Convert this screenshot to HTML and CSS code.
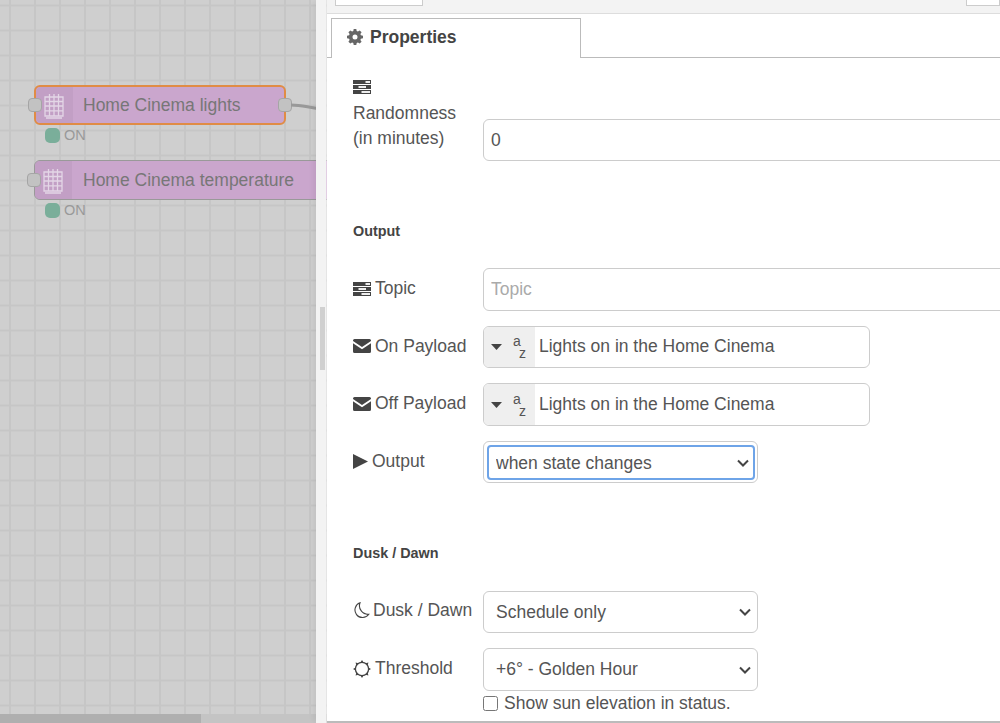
FILE: index.html
```html
<!DOCTYPE html>
<html lang="en">
<head>
<meta charset="utf-8">
<title>Node properties</title>
<link rel="stylesheet" href="styles.css">
</head>
<body>
<svg class="defs" width="0" height="0" aria-hidden="true">
  <symbol id="i-tasks" viewBox="0 0 18 14">
    <path fill="#444" d="M0 0h18v4H0zM0 5h18v4H0zM0 10h18v4H0z"/>
    <path fill="#eee" d="M12.500 1H17v2h-4.500zM5.500 6H13v2H5.500zM8.500 11H17v2H8.500z"/>
  </symbol>
  <symbol id="i-mail" viewBox="0 0 18 14">
    <path fill="#444" d="M0 1.500A1.500 1.500 0 0 1 1.500 0h15A1.500 1.500 0 0 1 18 1.500v.6L9 8 0 2.100zM0 4.300 9 10.200l9-5.900v8.200a1.500 1.500 0 0 1-1.500 1.500h-15A1.500 1.500 0 0 1 0 12.500z"/>
  </symbol>
</svg>

<main class="app">
  <section class="canvas">
    <div class="node selected node-lights">
      <span class="node-icon">
        <svg width="22" height="27" viewBox="0 0 22 27"><path fill="none" stroke="#e3d6e6" stroke-width="1.300" d="M2 5h18v19H2zM2 9.500h18M2 14h18M2 18.800h18M6.500 2v22M11 2v22M15.500 2v22M3 26h16"/></svg>
      </span>
      <span class="node-label">Home Cinema lights</span>
      <span class="port port-in"></span>
      <span class="port port-out"></span>
    </div>
    <div class="status status-lights"><span class="dot"></span>ON</div>

    <div class="node node-temp">
      <span class="node-icon">
        <svg width="22" height="27" viewBox="0 0 22 27"><path fill="none" stroke="#e3d6e6" stroke-width="1.300" d="M2 5h18v19H2zM2 9.500h18M2 14h18M2 18.800h18M6.500 2v22M11 2v22M15.500 2v22M3 26h16"/></svg>
      </span>
      <span class="node-label">Home Cinema temperature</span>
      <span class="port port-in"></span>
    </div>
    <div class="status status-temp"><span class="dot"></span>ON</div>

    <svg class="wire" width="40" height="20" viewBox="0 0 40 20"><path d="M0 4 C12 4 18 7 32 8" fill="none" stroke="#999" stroke-width="3"/></svg>

    <div class="scrollbar"><div class="thumb"></div></div>
    <div class="splitter"><span class="grip"></span></div>
  </section>

  <section class="panel">
    <div class="toolbar">
      <span class="tool-btn tool-left"></span>
      <span class="tool-btn tool-right"></span>
    </div>
    <div class="tabs">
      <div class="tab">
        <svg class="cog" width="16" height="16" viewBox="0 0 16 16"><path fill="#666" fill-rule="evenodd" d="M6.700 0h2.600l.4 2.100 1.200.5 1.800-1.200 1.900 1.900-1.200 1.800.5 1.200 2.100.4v2.600l-2.100.4-.5 1.200 1.200 1.800-1.900 1.900-1.800-1.200-1.200.5-.4 2.100H6.700l-.4-2.100-1.200-.5-1.800 1.200-1.900-1.900 1.200-1.800-.5-1.200L0 9.300V6.700l2.100-.4.500-1.200-1.200-1.800 1.900-1.900 1.800 1.200 1.200-.5zM8 5.500a2.500 2.500 0 1 0 0 5 2.500 2.500 0 0 0 0-5z"/></svg>
        Properties
      </div>
    </div>

    <form class="form">
      <div class="row row-random">
        <label class="label label-stack">
          <svg class="icon"><use href="#i-tasks"/></svg>
          <span>Randomness<br>(in minutes)</span>
        </label>
        <input class="field field-wide" type="text" value="0">
      </div>

      <h3 class="heading heading-output">Output</h3>

      <div class="row row-topic">
        <label class="label"><svg class="icon"><use href="#i-tasks"/></svg>Topic</label>
        <input class="field field-wide" type="text" placeholder="Topic">
      </div>

      <div class="row row-on">
        <label class="label"><svg class="icon"><use href="#i-mail"/></svg>On Payload</label>
        <div class="typed">
          <span class="typed-btn">
            <svg width="11" height="6" viewBox="0 0 11 6"><path fill="#444" d="M0 0h11L5.500 6z"/></svg>
            <span class="az"><span class="az-a">a</span><span class="az-z">z</span></span>
          </span>
          <span class="typed-value">Lights on in the Home Cinema</span>
        </div>
      </div>

      <div class="row row-off">
        <label class="label"><svg class="icon"><use href="#i-mail"/></svg>Off Payload</label>
        <div class="typed">
          <span class="typed-btn">
            <svg width="11" height="6" viewBox="0 0 11 6"><path fill="#444" d="M0 0h11L5.500 6z"/></svg>
            <span class="az"><span class="az-a">a</span><span class="az-z">z</span></span>
          </span>
          <span class="typed-value">Lights on in the Home Cinema</span>
        </div>
      </div>

      <div class="row row-output">
        <label class="label"><svg class="icon icon-play" viewBox="0 0 15 15"><path fill="#444" d="M0 0l15 7.500L0 15z"/></svg>Output</label>
        <div class="select-ring">
          <select class="select select-focus"><option>when state changes</option></select>
        </div>
      </div>

      <h3 class="heading heading-dusk">Dusk / Dawn</h3>

      <div class="row row-dusk">
        <label class="label"><svg class="icon icon-moon" viewBox="0 0 16 17"><path fill="none" stroke="#444" stroke-width="1.100" d="M6.500.8A7.600 7.600 0 1 0 15.300 12.300 8.600 8.600 0 0 1 6.500.8z"/></svg>Dusk / Dawn</label>
        <select class="select"><option>Schedule only</option></select>
      </div>

      <div class="row row-threshold">
        <label class="label"><svg class="icon icon-sun" viewBox="0 0 18 18"><circle cx="9" cy="9" r="6.600" fill="none" stroke="#444" stroke-width="1.300"/><path fill="#444" d="M9 0l1.600 2.500H7.400zM9 18l-1.600-2.500h3.200zM0 9l2.500-1.600v3.200zM18 9l-2.500 1.600V7.400zM2.600 2.600l2.900.7-2.200 2.200zM15.400 15.400l-2.900-.7 2.200-2.200zM15.400 2.600l-.7 2.900-2.200-2.200zM2.600 15.400l.7-2.900 2.200 2.200z"/></svg>Threshold</label>
        <select class="select"><option>+6° - Golden Hour</option></select>
      </div>

      <label class="check-row"><input class="check" type="checkbox">Show sun elevation in status.</label>
    </form>
  </section>
</main>
</body>
</html>
```
FILE: styles.css
```css
* { box-sizing: border-box; }
html, body { margin: 0; height: 100%; overflow: hidden; }
body {
  font-family: "Liberation Sans", Arial, sans-serif;
  font-size: 17.500px;
  color: #555;
  background: #fff;
}
.defs { position: absolute; }
.app { display: flex; width: 1000px; height: 723px; }

/* Canvas */
.canvas {
  position: relative;
  flex: 0 0 327px;
  overflow: hidden;
  background-color: #cfcfcf;
  background-image:
    linear-gradient(to bottom, #c6c6c6 2px, transparent 2px),
    linear-gradient(to right, #c6c6c6 2px, transparent 2px);
  background-size: 25px 25px;
  background-position: 0 4.500px, 9px 0;
}
.node {
  position: absolute;
  left: 34px;
  height: 40px;
  display: flex;
  align-items: center;
  background: #caa6cd;
  border: 1.500px solid #999;
  border-radius: 6px;
  color: #777;
  font-size: 17.500px;
}
.node.selected { border: 2px solid #e08c45; }
.node.selected .node-label { margin-left: 10px; }
.node-lights { top: 85px; width: 252px; }
.node-temp { top: 160px; width: 320px; }
.node-temp .port { top: 11.500px; }
.node-icon {
  flex: 0 0 37px;
  height: 100%;
  background: #c29fc5;
  border-radius: 5px 0 0 5px;
  display: flex;
  align-items: center;
  justify-content: center;
  padding-right: 2px;
}
.node-label { margin-left: 11px; white-space: nowrap; }
.port {
  position: absolute;
  top: 11px;
  width: 14px;
  height: 14px;
  background: #c2c2c2;
  border: 1px solid #a5a5a5;
  border-radius: 4px;
}
.port-in { left: -8px; }
.port-out { right: -8px; }
.status {
  position: absolute;
  left: 45px;
  display: flex;
  align-items: center;
  gap: 4px;
  font-size: 14.500px;
  color: #999;
}
.status-lights { top: 127px; }
.status-temp { top: 202px; }
.dot {
  width: 15px;
  height: 15px;
  border-radius: 5px;
  background: #7aae9a;
}
.wire { position: absolute; left: 291px; top: 101px; }
.scrollbar {
  position: absolute;
  left: 0;
  right: 0;
  bottom: 0;
  height: 9px;
  background: #c4c4c4;
}
.thumb { width: 201px; height: 100%; background: #afafaf; }
.splitter {
  position: absolute;
  top: 0;
  left: 316px;
  width: 11px;
  height: 723px;
  background: #f3f3f3;
  background-clip: padding-box;
  border-right: 1px solid rgba(255, 255, 255, .45);
  box-shadow: -5px 0 5px -2px rgba(0, 0, 0, .06);
}
.grip {
  position: absolute;
  left: 4px;
  top: 307px;
  width: 5px;
  height: 63px;
  background: #d0d0d0;
}

/* Panel */
.panel {
  flex: 1;
  min-width: 0;
  height: 723px;
  overflow: hidden;
  position: relative;
  border-bottom: 2px solid #bbb;
}
.toolbar {
  height: 14px;
  background: #f3f3f3;
  border-bottom: 1px solid #ddd;
  display: flex;
  justify-content: space-between;
  padding: 0 0 0 8px;
}
.tool-btn {
  height: 6px;
  background: #fff;
  border: 1px solid #ccc;
  border-top: 0;
}
.tool-left { width: 88px; }
.tool-right { width: 34px; }
.tabs {
  height: 44px;
  padding: 4px 0 0 4px;
  border-bottom: 1px solid #bbb;
}
.tab {
  width: 250px;
  height: 40px;
  background: #fff;
  border: 1px solid #bbb;
  border-bottom: 0;
  padding: 0 0 3px 15px;
  display: flex;
  align-items: center;
  gap: 7px;
  font-weight: 700;
  color: #444;
  font-size: 17.500px;
  margin-bottom: -1px;
  position: relative;
}
.form { padding: 0 0 0 26px; }
.row { display: flex; align-items: center; }
.label {
  flex: 0 0 130px;
  display: flex;
  align-items: center;
  white-space: nowrap;
  color: #555;
  position: relative;
  top: -1px;
}
.icon { width: 18px; height: 14px; margin-right: 4px; flex: none; }
.icon-play { width: 15px; height: 15px; margin-right: 4px; }
.icon-moon { width: 17px; height: 17px; margin-right: 3px; }
.icon-sun { width: 18px; height: 18px; margin-right: 4px; }
.label-stack {
  flex-direction: column;
  align-items: flex-start;
  line-height: 25px;
  gap: 7px;
  top: 0;
}
.field {
  font: inherit;
  color: #555;
  height: 43px;
  padding: 0 7px;
  border: 1px solid #ccc;
  border-radius: 6px;
  background: #fff;
  outline: 0;
}
.field::placeholder { color: #aaa; opacity: 1; }
.field-wide { width: 600px; flex: none; }
.row-random { padding-top: 22px; align-items: flex-end; }
.row-random .field { height: 42px; margin-bottom: -10px; }
.heading {
  margin: 0;
  font-size: 14.400px;
  font-weight: 700;
  color: #444;
  line-height: 18px;
}
.heading-output { margin-top: 71px; }
.row-topic { margin-top: 28px; height: 43px; }
.typed {
  display: flex;
  width: 387px;
  height: 42px;
  border: 1px solid #ccc;
  border-radius: 6px;
  overflow: hidden;
}
.row-off .typed { height: 43px; }
.row-off .typed-value { line-height: 41px; }
.typed-btn {
  flex: 0 0 51px;
  background: #efefef;
  display: flex;
  align-items: center;
  padding-left: 7px;
  gap: 11px;
}
.az { position: relative; width: 14px; height: 24px; display: block; font-size: 14px; color: #555; }
.az-a { position: absolute; left: 0; top: 0; line-height: 12px; }
.az-z { position: absolute; left: 6px; top: 12px; line-height: 12px; }
.typed-value { padding-left: 4px; line-height: 39px; white-space: nowrap; }
.row-on { margin-top: 15px; }
.row-off { margin-top: 15px; }
.row-output { margin-top: 15px; }
.select-ring {
  width: 275px;
  height: 42px;
  border: 1px solid #ccc;
  border-radius: 6px;
  padding: 3px 2px 3px 3px;
  display: flex;
}
.select {
  appearance: none;
  font: inherit;
  color: #555;
  width: 275px;
  height: 42px;
  padding: 0 30px 0 12px;
  background: #fff url("data:image/svg+xml,%3Csvg xmlns='http://www.w3.org/2000/svg' width='12' height='8' viewBox='0 0 12 8'%3E%3Cpath d='M1 1.500l5 5 5-5' fill='none' stroke='%23444' stroke-width='2'/%3E%3C/svg%3E") no-repeat right 6px center;
  border: 1px solid #ccc;
  border-radius: 6px;
}
.select-focus {
  width: 268px;
  height: 35px;
  padding-left: 7px;
  background-position: right 4px center;
  border: 2px solid #6ea4e8;
  border-radius: 4px;
  outline: 0;
}
.heading-dusk { margin-top: 61px; }
.row-dusk { margin-top: 29px; }
.row-dusk .label { top: -2px; }
.row-threshold { margin-top: 15px; }
.row-threshold .select { height: 43px; padding-bottom: 1px; }
.check-row {
  display: flex;
  align-items: center;
  gap: 6px;
  height: 24px;
  white-space: nowrap;
  margin-left: 130px;
}
.check { margin: 0; width: 15px; height: 15px; }
```
